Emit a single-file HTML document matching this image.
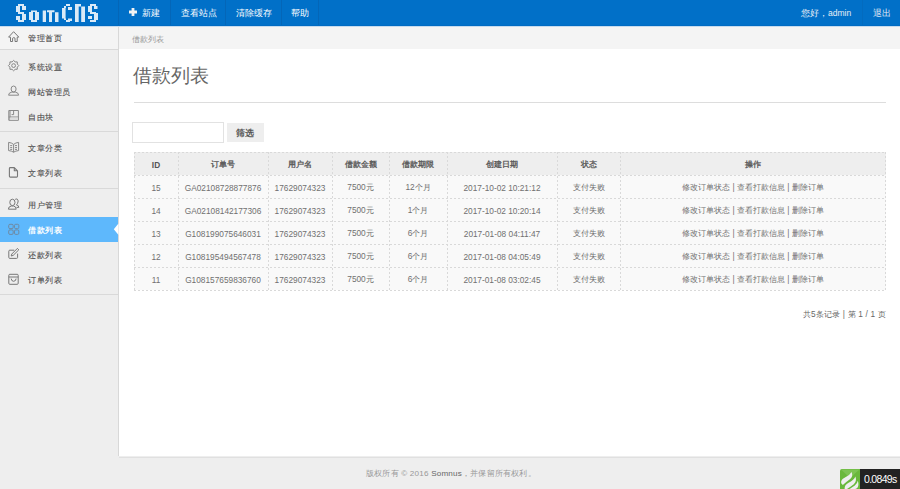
<!DOCTYPE html>
<html><head><meta charset="utf-8">
<style>
*{margin:0;padding:0;box-sizing:border-box}
html,body{width:900px;height:489px;overflow:hidden;background:#eee;font-family:"Liberation Sans",sans-serif;}
.abs{position:absolute}
#hd{position:absolute;left:0;top:0;width:900px;height:26px;background:#0170c8}
.sep{position:absolute;top:0;width:1px;height:26px;background:#0466b8}
.nav{position:absolute;top:0;height:26px;line-height:26px;color:#fff;font-size:8.5px;white-space:nowrap}
#sb{position:absolute;left:0;top:26px;width:119px;height:430px;background:#eee;border-right:1px solid #d8d8d8}
.mi{position:absolute;left:0;width:118px;height:25px;line-height:25px;font-size:8px;letter-spacing:0.5px;color:#4a4a4a;white-space:nowrap;-webkit-text-stroke:0.1px #4a4a4a}
.mi span{position:absolute;left:28px;top:1px}
.dv{position:absolute;left:0;width:118px;height:1px;background:#d9d9d9}
#ct{position:absolute;left:119px;top:26px;width:781px;height:430px;background:#fff}
#bc{position:absolute;left:0;top:0;width:781px;height:23px;background:#f4f4f4;color:#999;font-size:7.8px;line-height:27px;padding-left:13px}
table{position:absolute;left:134px;top:152px;border-collapse:collapse;font-size:8.3px;color:#707070}
.hl{position:absolute;left:134px;width:752px;height:1px;background:repeating-linear-gradient(90deg,#d9d9d9 0 2px,transparent 2px 4px)}
.vl{position:absolute;top:152px;width:1px;height:139px;background:repeating-linear-gradient(180deg,#d9d9d9 0 2px,transparent 2px 4px)}
.c{font-size:8px}
td,th{height:23px;text-align:center;border:0;font-weight:normal;white-space:nowrap;padding:2px 0 0 0;vertical-align:middle}
th{background:#eee;font-weight:bold;color:#555}
th .c{font-weight:normal;-webkit-text-stroke:0.3px #555}
td{background:#f9f9f9}
#ft{position:absolute;left:0;top:456px;width:900px;height:33px;background:#eee;color:#999;font-size:8.1px;letter-spacing:0.2px;text-align:center}
</style></head><body>
<div id="hd">
  <svg class="abs" style="left:0;top:0" width="118" height="26" viewBox="0 0 118 26">
    <g fill="#fff" opacity="0.86">
      <path d="M18 4h6v2h-6zM16 6h4v6h-4zM22 6h4v4h-4zM18 12h6v2h-6zM22 14h4v6h-4zM16 16h4v4h-4zM18 20h6v2h-6z"/>
      <path d="M31 10.5h6V12h-6zM29 12h4v8h-4zM35 12h4v8h-4zM31 20h6v2h-6z"/>
      <path d="M42.7 10.5h3.3V22h-3.3zM47 10.2h7.5v2H47zM49 12.2h3V22h-3zM55 12.2h3.5V22H55z"/>
      <path d="M64 6h2v2h-2zM62 8h3.6v10.5H62zM64 18.5h2v1.5h-2zM66 4h4v2h-4zM68 7h4v3h-4zM66 20h4v2h-4zM68 18.5h4v2.5h-4z"/>
      <path d="M75 4h6v2.5h-6zM75 6.5h3.7V22H75zM81.2 6.5H85V22h-3.8z"/>
      <path d="M90 4h6v2h-6zM88 6h4v6h-4zM94 6h3.5v3H94zM90 12h6v2h-6zM94 13h4v7h-4zM88 16h4v3h-4zM90 20h6v2h-6z"/>
    </g>
  </svg>
  <div class="sep" style="left:118px"></div>
  <div class="sep" style="left:170px"></div>
  <div class="sep" style="left:225px"></div>
  <div class="sep" style="left:281px"></div>
  <div class="sep" style="left:318px"></div>
  <div class="sep" style="left:862px;background:#036bbf"></div>
  <svg class="abs" style="left:129px;top:8px" width="8" height="8" viewBox="0 0 8 8"><path d="M2.6 0h2.8v2.6h2.6v2.8H5.4v2.6H2.6V5.4H0V2.6h2.6z" fill="#f2f2f2"/></svg>
  <div class="nav" style="left:142px">新建</div>
  <div class="nav" style="left:181px">查看站点</div>
  <div class="nav" style="left:236px">清除缓存</div>
  <div class="nav" style="left:291px">帮助</div>
  <div class="nav" style="left:801px;color:#e8eef6">您好，admin</div>
  <div class="nav" style="left:873px;color:#e8eef6">退出</div>
</div>

<div id="sb">
  <div class="mi" style="top:0;background:#f4f4f4;height:23px;line-height:23px"><span style="top:0.5px">管理首页</span></div>
  <div class="dv" style="top:23px"></div>
  <div class="mi" style="top:28px"><span>系统设置</span></div>
  <div class="mi" style="top:53px"><span>网站管理员</span></div>
  <div class="mi" style="top:78px"><span>自由块</span></div>
  <div class="dv" style="top:105px"></div>
  <div class="mi" style="top:109px"><span>文章分类</span></div>
  <div class="mi" style="top:134px"><span>文章列表</span></div>
  <div class="dv" style="top:162px"></div>
  <div class="mi" style="top:166px"><span>用户管理</span></div>
  <div class="mi" style="top:191px;background:#5eb8fc;color:#fff;font-weight:bold;-webkit-text-stroke:0"><span>借款列表</span></div>
  <div class="mi" style="top:216px"><span>还款列表</span></div>
  <div class="mi" style="top:241px"><span>订单列表</span></div>
  <div class="dv" style="top:268px"></div>
</div>
<svg class="abs" style="left:0;top:0" width="120" height="300" viewBox="0 0 120 300">
 <g fill="none" stroke="#777" stroke-width="1" stroke-linejoin="round">
  <g transform="translate(4,28)"><path d="M6.5 13.5V9.2L4.6 9.1L9.6 3.7L14.8 9.1L13.2 9.2V13.5H11V10.2Q9.8 8.9 8.6 10.2V13.5Z"/></g>
  <g transform="translate(4,56)" stroke="#888"><path d="M9.60 4.40 L11.13 5.90 L13.28 5.92 L13.30 8.07 L14.80 9.60 L13.30 11.13 L13.28 13.28 L11.13 13.30 L9.60 14.80 L8.07 13.30 L5.92 13.28 L5.90 11.13 L4.40 9.60 L5.90 8.07 L5.92 5.92 L8.07 5.90Z"/><circle cx="9.6" cy="9.6" r="1.9"/></g>
  <g transform="translate(4,81)" stroke="#888"><ellipse cx="9.6" cy="8" rx="2.5" ry="3"/><path d="M4.6 14.2Q4.6 11.6 7.8 11.1H11.4Q14.6 11.6 14.6 14.2Z"/></g>
  <g transform="translate(4,106)" stroke="#888"><rect x="4.8" y="4.5" width="9.6" height="9.8"/><path d="M4.8 11H14.4M9.6 4.5V8.6H7.6M6 5V13.8"/><rect x="6" y="11.5" width="8" height="2.4" fill="#ddd" stroke="none"/></g>
  <g transform="translate(4,137)" stroke="#888"><path d="M4.6 5.4Q7.5 5.6 9.6 7.4Q11.7 5.6 14.6 5.4V13.6Q11.7 13.8 9.6 15.2Q7.5 13.8 4.6 13.6ZM9.6 7.4V15.2M6.2 8.6H8.2M6.2 10.6H8.2M6.2 12.4H8.2M11 8.6H13M11 10.6H13M11 12.4H13"/></g>
  <g transform="translate(4,162)" stroke-width="1.1"><path d="M6.3 5.6H10.3L13.5 8.9V14.2Q13.5 15.1 12.6 15.1H6.3Q5.4 15.1 5.4 14.2V6.5Q5.4 5.6 6.3 5.6ZM10.3 5.9V8.8H13.3"/></g>
  <g transform="translate(4,194)" stroke="#777"><ellipse cx="8.4" cy="8.4" rx="2.6" ry="3.2"/><path d="M4.4 15.2Q4.4 12.4 7.4 12H9.6Q12.2 12.4 12.2 15.2Z"/><path d="M11.2 5.4Q12.2 4.6 13.3 5.2Q15 6.5 13.6 9.4Q13.2 10.3 12.4 10.8Q14.8 11.2 14.8 13.4H12.6"/></g>
  <g transform="translate(4,219)" stroke="#6f8aa3"><rect x="4.7" y="5.3" width="4.5" height="4.3" rx="1.2"/><rect x="10.5" y="5.3" width="4.3" height="4.3" rx="1.2"/><rect x="4.7" y="10.9" width="4.5" height="4.5" rx="1.2"/><rect x="10.5" y="10.9" width="4.3" height="4.5" rx="1.2"/></g>
  <g transform="translate(4,244)" stroke="#777"><path d="M10.2 6.2H5.8Q4.8 6.2 4.8 7.2V13.4Q4.8 14.4 5.8 14.4H12.6Q13.6 14.4 13.6 13.4V9.6"/><path d="M7.2 12L7.8 10L13.4 4.4L14.8 5.8L9.2 11.4Z"/></g>
  <g transform="translate(4,269)" stroke="#777"><rect x="4.8" y="5.3" width="9.4" height="10" rx="1"/><path d="M4.8 8H14.2M7.2 9.6Q7.4 12.2 9.6 12.3Q11.9 12.2 12.1 9.6"/></g>
 </g>
 <path d="M118.5 223.5L113.8 229.2L118.5 234.9Z" fill="#fff"/>
</svg>

<div id="ct">
  <div id="bc">借款列表</div>
  <div class="abs" style="left:14px;top:38px;font-size:18.8px;color:#666;line-height:24px">借款列表</div>
  <div class="abs" style="left:15px;top:76px;width:752px;height:1px;background:#ddd"></div>
  <div class="abs" style="left:13px;top:96px;width:92px;height:21px;border:1px solid #e2e2e2;background:#fff"></div>
  <div class="abs" style="left:108px;top:97px;width:37px;height:19px;background:#eee;color:#555;font-weight:bold;font-size:8.5px;line-height:21px;text-align:center;text-indent:-1px">筛选</div>
</div>

<table>
<tr><th style="width:44px">ID</th><th style="width:90px"><span class="c">订单号</span></th><th style="width:64px"><span class="c">用户名</span></th><th style="width:57px"><span class="c">借款金额</span></th><th style="width:58px"><span class="c">借款期限</span></th><th style="width:110px"><span class="c">创建日期</span></th><th style="width:63px"><span class="c">状态</span></th><th style="width:266px"><span class="c">操作</span></th></tr>
<tr><td>15</td><td>GA02108728877876</td><td>17629074323</td><td>7500<span class="c">元</span></td><td>12<span class="c">个月</span></td><td>2017-10-02 10:21:12</td><td><span class="c">支付失败</span></td><td><span class="c">修改订单状态</span> | <span class="c">查看打款信息</span> | <span class="c">删除订单</span></td></tr>
<tr><td>14</td><td>GA02108142177306</td><td>17629074323</td><td>7500<span class="c">元</span></td><td>1<span class="c">个月</span></td><td>2017-10-02 10:20:14</td><td><span class="c">支付失败</span></td><td><span class="c">修改订单状态</span> | <span class="c">查看打款信息</span> | <span class="c">删除订单</span></td></tr>
<tr><td>13</td><td>G108199075646031</td><td>17629074323</td><td>7500<span class="c">元</span></td><td>6<span class="c">个月</span></td><td>2017-01-08 04:11:47</td><td><span class="c">支付失败</span></td><td><span class="c">修改订单状态</span> | <span class="c">查看打款信息</span> | <span class="c">删除订单</span></td></tr>
<tr><td>12</td><td>G108195494567478</td><td>17629074323</td><td>7500<span class="c">元</span></td><td>6<span class="c">个月</span></td><td>2017-01-08 04:05:49</td><td><span class="c">支付失败</span></td><td><span class="c">修改订单状态</span> | <span class="c">查看打款信息</span> | <span class="c">删除订单</span></td></tr>
<tr><td>11</td><td>G108157659836760</td><td>17629074323</td><td>7500<span class="c">元</span></td><td>6<span class="c">个月</span></td><td>2017-01-08 03:02:45</td><td><span class="c">支付失败</span></td><td><span class="c">修改订单状态</span> | <span class="c">查看打款信息</span> | <span class="c">删除订单</span></td></tr>
</table>
<div class="hl" style="top:152px"></div><div class="hl" style="top:175px"></div><div class="hl" style="top:198px"></div><div class="hl" style="top:221px"></div><div class="hl" style="top:244px"></div><div class="hl" style="top:267px"></div><div class="hl" style="top:290px"></div><div class="vl" style="left:134px"></div><div class="vl" style="left:178px"></div><div class="vl" style="left:268px"></div><div class="vl" style="left:332px"></div><div class="vl" style="left:389px"></div><div class="vl" style="left:447px"></div><div class="vl" style="left:557px"></div><div class="vl" style="left:620px"></div><div class="vl" style="left:885px"></div>
<div class="abs" style="left:690px;top:308px;width:196px;text-align:right;font-size:8.3px;letter-spacing:0.18px;color:#666;line-height:12px">共5条记录 | 第 1 / 1 页</div>

<div id="ft"><div class="abs" style="left:119px;top:1px;width:781px;height:1px;background:#e0e0e0"></div><div class="abs" style="left:366px;top:12px;white-space:nowrap">版权所有 © 2016 <span style="color:#666">Somnus</span>，并保留所有权利。</div></div>
<svg class="abs" style="left:840px;top:469px" width="20" height="20" viewBox="0 0 20 20"><path d="M2 0H20V20H0V2Q0 0 2 0Z" fill="#6ab83c"/><path d="M1 0.5H19.5L10 9Z" fill="#7dc353"/><g fill="#eeeeee"><path d="M1.2 14.2Q0.6 10.6 4.6 8.8Q9.6 6.6 11.6 3Q13.4 7.4 10.2 10Q6.4 12.8 2.8 16Z"/><path d="M4.6 19.8Q4.4 15.8 8.6 13.8Q13.6 11.6 15.4 7.6Q17 12.2 13.8 15.2Q10.4 17.8 7 20H4.8Z"/><path d="M9.6 20Q12.2 18 14.8 16.4Q17.4 14.6 17.8 11.8Q19.2 16 17.6 18.4Q16.6 19.7 15.2 20Z"/></g></svg>
<div class="abs" style="left:860px;top:469px;width:40px;height:20px;background:#222;color:#fff;font-size:10.5px;line-height:21px;padding-left:4px;letter-spacing:-0.7px">0.0849s</div>
<div class="abs" style="left:0;top:25px;width:900px;height:1px;background:#006bc3"></div>
<div class="abs" style="left:0;top:26px;width:900px;height:1px;background:#c6dbee"></div>
</body></html>
